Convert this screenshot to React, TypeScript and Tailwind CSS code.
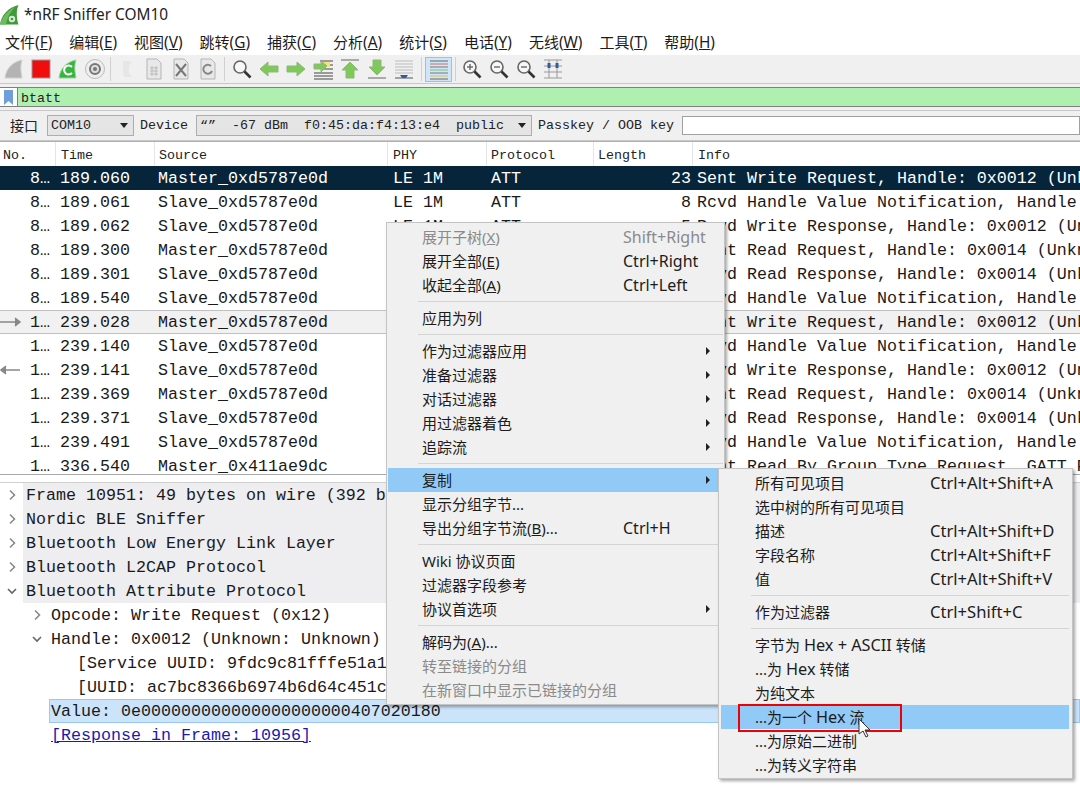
import React from 'react';

const uiFont = 'font-["Noto_Sans","Noto_Sans_CJK_SC",sans-serif]';
const monoFont = 'font-["Liberation_Mono","Noto_Sans_CJK_SC",monospace]';

const menus: [string, string][] = [
  ['文件', 'F'], ['编辑', 'E'], ['视图', 'V'], ['跳转', 'G'], ['捕获', 'C'], ['分析', 'A'],
  ['统计', 'S'], ['电话', 'Y'], ['无线', 'W'], ['工具', 'T'], ['帮助', 'H'],
];

const write = 'Sent Write Request, Handle: 0x0012 (Unknown: Unknown)';
const notify = 'Rcvd Handle Value Notification, Handle: 0x0014 (Unknown)';
const writeRsp = 'Rcvd Write Response, Handle: 0x0012 (Unknown: Unknown)';
const read = 'Sent Read Request, Handle: 0x0014 (Unknown: Unknown)';
const readRsp = 'Rcvd Read Response, Handle: 0x0014 (Unknown: Unknown)';

const packets = [
  ['8…', '189.060', 'Master_0xd5787e0d', '23', write],
  ['8…', '189.061', 'Slave_0xd5787e0d', '8', notify],
  ['8…', '189.062', 'Slave_0xd5787e0d', '5', writeRsp],
  ['8…', '189.300', 'Master_0xd5787e0d', '9', read],
  ['8…', '189.301', 'Slave_0xd5787e0d', '8', readRsp],
  ['8…', '189.540', 'Slave_0xd5787e0d', '8', notify],
  ['1…', '239.028', 'Master_0xd5787e0d', '23', write],
  ['1…', '239.140', 'Slave_0xd5787e0d', '8', notify],
  ['1…', '239.141', 'Slave_0xd5787e0d', '5', writeRsp],
  ['1…', '239.369', 'Master_0xd5787e0d', '9', read],
  ['1…', '239.371', 'Slave_0xd5787e0d', '8', readRsp],
  ['1…', '239.491', 'Slave_0xd5787e0d', '8', notify],
  ['1…', '336.540', 'Master_0x411ae9dc', '13', 'Sent Read By Group Type Request, GATT Primary Service'],
];

const Chevron = ({ open }: { open?: boolean }) => (
  <svg width="12" height="12" viewBox="0 0 12 12" fill="none" stroke="#8a8a8a" strokeWidth="1.6" className="shrink-0">
    {open ? <path d="M2 4l4 4 4-4" stroke="#666" /> : <path d="M4 1.5L8.5 6 4 10.5" />}
  </svg>
);

const Tool = ({ children, active }: { children: React.ReactNode; active?: boolean }) => (
  <div className={`flex h-[25px] w-[27px] shrink-0 items-center justify-center ${active ? 'border border-[#90c4ee] bg-[#cfe5f8]' : ''}`}>
    <svg width="22" height="22" viewBox="0 0 22 22">{children}</svg>
  </div>
);

const ToolSep = ({ w }: { w: string }) => (
  <div className={`flex h-[24px] shrink-0 justify-center ${w}`}>
    <div className="h-full w-px bg-[#d0d0d0]" />
  </div>
);

const PageIcon = ({ children }: { children: React.ReactNode }) => (
  <>
    <path d="M4 1h10l4 4v16H4z" fill="#e8e8e8" stroke="#b5b5b5" />
    {children}
  </>
);

const Magnifier = ({ sign }: { sign?: 'plus' | 'minus' }) => (
  <>
    <circle cx="9" cy="9" r="6" fill="#f7f7f7" stroke="#666" strokeWidth="1.6" />
    <path d="M13.5 13.5L19.5 19.5" stroke="#333" strokeWidth="2.6" />
    {sign && <path d="M6 9h6" stroke="#666" strokeWidth="1.4" />}
    {sign === 'plus' && <path d="M9 6v6" stroke="#666" strokeWidth="1.4" />}
  </>
);

const GreenArrow = ({ d }: { d: string }) => (
  <path d={d} fill="#7fc95a" stroke="#8fb87a" strokeWidth="1" />
);

const MenuSep = () => (
  <div className="flex h-[9px] items-center">
    <div className="ml-[30px] h-px flex-1 bg-[#d4d4d4]" />
  </div>
);

// latin in the reference runs wider than the CJK size suggests
const Lat = ({ children }: { children: React.ReactNode }) => <span className="text-[16.3px]">{children}</span>;

const MenuItem = ({ label, key_, shortcut, arrow, active, disabled, width, under, wide }: {
  label: React.ReactNode; key_?: string; shortcut?: string; arrow?: boolean; active?: boolean; disabled?: boolean; width: string; under?: string; wide?: boolean;
}) => (
  <div className={`flex h-[24px] items-center pl-[34px] text-[15px] ${active ? 'bg-[#91c9f7]' : ''} ${disabled ? 'text-[#8a8a8a]' : 'text-[#1c1c1c]'}`}>
    <span className={`shrink-0 whitespace-pre ${width}`}>
      {label}
      {under && <>(<span className="underline">{under}</span>){key_}</>}
    </span>
    {shortcut && <span className={`whitespace-pre ${wide ? 'text-[16.6px]' : 'text-[16px]'}`}>{shortcut}</span>}
    {arrow && (
      <svg width="6" height="8" viewBox="0 0 6 8" className="ml-auto mr-[12px]"><path d="M1 0l4 4-4 4z" fill="#222" /></svg>
    )}
  </div>
);

const MainMenu = () => {
  const w = 'w-[201px]';
  return (
    <div className={`absolute left-[386px] top-[222px] h-[483px] w-[339px] border border-[#c4c4c4] bg-[#f0f0f0] px-px pt-[2px] shadow-[2px_2px_3px_rgba(0,0,0,0.35)] ${uiFont}`}>
      <MenuItem width={w} label="展开子树" under="X" shortcut="Shift+Right" disabled />
      <MenuItem width={w} label="展开全部" under="E" shortcut="Ctrl+Right" />
      <MenuItem width={w} label="收起全部" under="A" shortcut="Ctrl+Left" />
      <MenuSep />
      <MenuItem width={w} label="应用为列" />
      <MenuSep />
      <MenuItem width={w} label="作为过滤器应用" arrow />
      <MenuItem width={w} label="准备过滤器" arrow />
      <MenuItem width={w} label="对话过滤器" arrow />
      <MenuItem width={w} label="用过滤器着色" arrow />
      <MenuItem width={w} label="追踪流" arrow />
      <MenuSep />
      <MenuItem width={w} label="复制" arrow active />
      <MenuItem width={w} label="显示分组字节..." />
      <MenuItem width={w} label="导出分组字节流" under="B" key_="..." shortcut="Ctrl+H" />
      <MenuSep />
      <MenuItem width={w} label="Wiki 协议页面" />
      <MenuItem width={w} label="过滤器字段参考" />
      <MenuItem width={w} label="协议首选项" arrow />
      <MenuSep />
      <MenuItem width={w} label="解码为" under="A" key_="..." />
      <MenuItem width={w} label="转至链接的分组" disabled />
      <MenuItem width={w} label="在新窗口中显示已链接的分组" disabled />
    </div>
  );
};

const CopyMenu = () => {
  const w = 'w-[175px]';
  return (
    <div className={`absolute left-[718px] top-[468px] h-[311px] w-[355px] border border-[#c4c4c4] bg-[#f0f0f0] pl-[2px] pr-[3px] pt-[2px] shadow-[2px_2px_3px_rgba(0,0,0,0.35)] ${uiFont}`}>
      <MenuItem wide width={w} label="所有可见项目" shortcut="Ctrl+Alt+Shift+A" />
      <MenuItem width={w} label="选中树的所有可见项目" />
      <MenuItem wide width={w} label="描述" shortcut="Ctrl+Alt+Shift+D" />
      <MenuItem wide width={w} label="字段名称" shortcut="Ctrl+Alt+Shift+F" />
      <MenuItem wide width={w} label="值" shortcut="Ctrl+Alt+Shift+V" />
      <MenuSep />
      <MenuItem wide width={w} label="作为过滤器" shortcut="Ctrl+Shift+C" />
      <MenuSep />
      <MenuItem width={w} label={<>字节为 <Lat>Hex + ASCII</Lat> 转储</>} />
      <MenuItem width={w} label={<>...为 <Lat>Hex</Lat> 转储</>} />
      <MenuItem width={w} label="为纯文本" />
      <MenuItem width={w} label={<>...为一个 <Lat>Hex</Lat> 流</>} active />
      <MenuItem width={w} label="...为原始二进制" />
      <MenuItem width={w} label="...为转义字符串" />
    </div>
  );
};

const DetailRow = ({ children, indent, chevron, open, shaded }: {
  children: React.ReactNode; indent: string; chevron?: boolean; open?: boolean; shaded?: boolean;
}) => (
  <div className={`flex h-[24px] items-center whitespace-pre ${indent}`}>
    <div className="flex w-[23px] shrink-0 justify-center">{chevron && <Chevron open={open} />}</div>
    <div className={`flex h-full flex-1 items-center pl-[3px] ${shaded ? 'bg-[#eeedf0]' : ''}`}>{children}</div>
  </div>
);

export default function App() {
  return (
    <div className={`relative h-[791px] w-[1080px] overflow-hidden bg-white ${uiFont}`}>
      {/* title */}
      <div className="flex h-[30px] items-center bg-white">
        <svg width="20" height="20" viewBox="0 0 20 20" className="mr-[4px] shrink-0">
          <path d="M0 19.500C1.500 10 8 2.500 18.500 0c-2.500 5.500-2 13.500 0 19.500z" fill="#3f9a3a" />
          <path d="M0 19.500C2 12 8 5 15 2c-5 5-8 11-9 17.500z" fill="#6dbb5e" />
          <circle cx="12" cy="14" r="3.200" fill="#d8ead6" />
          <circle cx="12" cy="14" r="1.300" fill="#3f9a3a" />
        </svg>
        <span className="text-[15.4px] text-[#222]">*nRF Sniffer COM10</span>
      </div>
      {/* menu bar */}
      <div className="flex h-[25px] items-center gap-[17px] bg-white pl-[5px] text-[15px] text-[#1c1c1c]">
        {menus.map(([name, k]) => (
          <span key={k} className="whitespace-pre">{name}<span className="text-[15.4px]">(<span className="underline">{k}</span>)</span></span>
        ))}
      </div>
      {/* toolbar */}
      <div className="flex h-[29px] items-center border-b border-[#c8c8c8] bg-[#f0f0f0]">
        <Tool><path d="M2 20C3 11 9 4 19 2c-2 6-1 13 0 18z" fill="#b4b4b4" stroke="#d0d0d0" /></Tool>
        <Tool><rect x="2" y="2" width="18" height="18" fill="#f00d0d" stroke="#999" /></Tool>
        <Tool>
          <path d="M2 20C3 11 9 4 19 2c-2 6-1 13 0 18z" fill="#35b53c" stroke="#9bd49b" />
          <path d="M15 9a4.500 4.500 0 1 0 0 6" fill="none" stroke="#fff" strokeWidth="2" />
        </Tool>
        <Tool>
          <circle cx="11" cy="11" r="9.500" fill="#eee" stroke="#bbb" />
          <circle cx="11" cy="11" r="5" fill="#ddd" stroke="#777" strokeWidth="2" />
          <circle cx="11" cy="11" r="2" fill="#777" />
        </Tool>
        <ToolSep w="w-[5px]" />
        <Tool><path d="M7 3h8v3l-2 1v9l2 1v2H8l-1-3V3z" fill="#e6e6e6" /></Tool>
        <Tool>
          <PageIcon><path d="M7 10h8M7 13h8M7 16h8M9 8v10M13 8v10" stroke="#bbb" /></PageIcon>
        </Tool>
        <Tool>
          <PageIcon><path d="M6 6l10 12M16 6L6 18" stroke="#777" strokeWidth="2" /></PageIcon>
        </Tool>
        <Tool>
          <PageIcon><path d="M14 8a4.500 4.500 0 1 0 1 5" fill="none" stroke="#888" strokeWidth="2" /></PageIcon>
        </Tool>
        <ToolSep w="w-[7px]" />
        <Tool><Magnifier /></Tool>
        <Tool><GreenArrow d="M2 11l8-7v4h10v6H10v4z" /></Tool>
        <Tool><GreenArrow d="M20 11l-8-7v4H2v6h10v4z" /></Tool>
        <Tool>
          <path d="M8 3h13M12 7h9M12 11h9M2 15h19M2 18h19M2 21h19" stroke="#444" />
          <path d="M10 4h8v5h-2z" fill="#f5e27a" />
          <GreenArrow d="M15 8L9 3v3H2v5h7v3z" />
        </Tool>
        <Tool>
          <path d="M2 2h18" stroke="#aaa" strokeWidth="2" />
          <GreenArrow d="M11 4l8 8h-4v8H7v-8H3z" />
        </Tool>
        <Tool>
          <GreenArrow d="M11 17l8-8h-4V2H7v7H3z" />
          <path d="M2 20h18" stroke="#aaa" strokeWidth="2" />
        </Tool>
        <Tool>
          <path d="M2 3h18M2 6h18M2 9h18M2 12h18M2 15h18" stroke="#bbb" />
          <path d="M2 20h18" stroke="#555" />
          <path d="M7 17h8l-2 3H9z" fill="#2f5e9e" />
        </Tool>
        <ToolSep w="w-[8px]" />
        <Tool active>
          <path d="M2 3h18" stroke="#666" />
          <path d="M2 6h18" stroke="#d86a6a" />
          <path d="M2 9h18" stroke="#777" />
          <path d="M2 12h18" stroke="#7cbf7c" />
          <path d="M2 15h18" stroke="#777" />
          <path d="M2 18h18" stroke="#e2bf5a" />
          <path d="M2 21h18" stroke="#666" />
        </Tool>
        <ToolSep w="w-[6px]" />
        <Tool><Magnifier sign="plus" /></Tool>
        <Tool><Magnifier sign="minus" /></Tool>
        <Tool><Magnifier sign="minus" /></Tool>
        <Tool>
          <path d="M2 2h18M2 8h18M2 14h18M2 20h18M7 2v18M15 2v18" stroke="#999" />
          <rect x="5.500" y="5" width="3" height="5" fill="#2f5e9e" />
          <rect x="13.500" y="5" width="3" height="5" fill="#2f5e9e" />
        </Tool>
      </div>
      {/* display filter */}
      <div className="flex h-[26px] items-center bg-[#f0f0f0]">
        <div className="flex h-[20px] w-full border-y border-[#808080] bg-[#afefaf]">
          <div className="flex w-[18px] shrink-0 items-center justify-center border-r border-[#808080] bg-white">
            <svg width="9" height="15" viewBox="0 0 9 15"><path d="M0 0h9v15L4.500 11 0 15z" fill="#6f9fd8" /></svg>
          </div>
          <span className={`pl-[3px] text-[13.3px] leading-[21px] text-[#222] ${monoFont}`}>btatt</span>
        </div>
      </div>
      {/* sniffer toolbar */}
      <div className={`flex h-[31px] items-center border-y border-[#c8c8c8] bg-[#f0f0f0] text-[13.33px] text-[#222] ${monoFont}`}>
        <span className={`ml-[10px] w-[37px] shrink-0 text-[14px] ${uiFont}`}>接口</span>
        <div className="flex h-[21px] w-[87px] shrink-0 items-center justify-between border border-[#adadad] bg-[#e5e5e5] pl-[3px] pr-[5px]">
          <span>COM10</span>
          <svg width="8" height="5" viewBox="0 0 8 5"><path d="M0 0h8L4 5z" fill="#222" /></svg>
        </div>
        <span className="ml-[6px] w-[56px] shrink-0">Device</span>
        <div className="flex h-[21px] w-[336px] shrink-0 items-center justify-between border border-[#adadad] bg-[#e5e5e5] pl-[3px] pr-[5px]">
          <span className="whitespace-pre">{'“”  -67 dBm  f0:45:da:f4:13:e4  public'}</span>
          <svg width="8" height="5" viewBox="0 0 8 5"><path d="M0 0h8L4 5z" fill="#222" /></svg>
        </div>
        <span className="ml-[6px] w-[144px] shrink-0 whitespace-pre">Passkey / OOB key</span>
        <div className="h-[19px] flex-1 border border-[#a0a0a0] bg-white" />
      </div>
      {/* packet list header */}
      <div className={`flex h-[25px] items-center border-t border-[#b0b0b0] bg-white text-[13.33px] text-[#222] ${monoFont}`}>
        <div className="h-full w-[56px] border-r border-[#e5e5e5] pl-[3px] leading-[27px]">No.</div>
        <div className="h-full w-[99px] border-r border-[#e5e5e5] pl-[5px] leading-[27px]">Time</div>
        <div className="h-full w-[233px] border-r border-[#e5e5e5] pl-[4px] leading-[27px]">Source</div>
        <div className="h-full w-[99px] border-r border-[#e5e5e5] pl-[5px] leading-[27px]">PHY</div>
        <div className="h-full w-[107px] border-r border-[#e5e5e5] pl-[4px] leading-[27px]">Protocol</div>
        <div className="h-full w-[99px] border-r border-[#e5e5e5] pl-[4px] leading-[27px]">Length</div>
        <div className="h-full flex-1 pl-[5px] leading-[27px]">Info</div>
      </div>
      {/* packet list */}
      <div className={`h-[308px] overflow-hidden text-[16.67px] ${monoFont}`}>
        {packets.map((p, i) => (
          <div
            key={i}
            className={`relative flex h-[24px] items-center whitespace-pre ${i === 0 ? 'bg-[#06253b] text-white' : i === 6 ? 'border-y border-[#c0c0c0] bg-[#f1f1f1] text-[#1a1a1a]' : 'text-[#1a1a1a]'}`}
          >
            {i === 6 && (
              <svg width="22" height="10" viewBox="0 0 22 10" className="absolute left-0 top-[6px]"><path d="M0 5h20M15 1l5 4-5 4" stroke="#888" strokeWidth="1.500" fill="#888" /></svg>
            )}
            {i === 8 && (
              <svg width="22" height="10" viewBox="0 0 22 10" className="absolute left-0 top-[7px]"><path d="M20 5H1M6 1L1 5l5 4" stroke="#888" strokeWidth="1.500" fill="#888" /></svg>
            )}
            <div className="w-[50px] shrink-0 text-right">{p[0]}</div>
            <div className="w-[108px] shrink-0 pl-[10px]">{p[1]}</div>
            <div className="w-[235px] shrink-0">{p[2]}</div>
            <div className="w-[98px] shrink-0">LE 1M</div>
            <div className="w-[109px] shrink-0">ATT</div>
            <div className="w-[91px] shrink-0 text-right">{p[3]}</div>
            <div className="shrink-0 pl-[6px]">{p[4]}</div>
          </div>
        ))}
      </div>
      {/* packet details */}
      <div className={`border-t border-[#a8a8a8] pt-[7px] text-[16.67px] text-[#1a1a1a] ${monoFont}`}>
        <div className="border-t border-[#d0d0d0]" />
        <DetailRow indent="" chevron shaded>Frame 10951: 49 bytes on wire (392 bits), 49 bytes captured (392 bits)</DetailRow>
        <DetailRow indent="" chevron shaded>Nordic BLE Sniffer</DetailRow>
        <DetailRow indent="" chevron shaded>Bluetooth Low Energy Link Layer</DetailRow>
        <DetailRow indent="" chevron shaded>Bluetooth L2CAP Protocol</DetailRow>
        <DetailRow indent="" chevron open shaded>Bluetooth Attribute Protocol</DetailRow>
        <DetailRow indent="pl-[25px]" chevron>Opcode: Write Request (0x12)</DetailRow>
        <DetailRow indent="pl-[25px]" chevron open>Handle: 0x0012 (Unknown: Unknown)</DetailRow>
        <DetailRow indent="pl-[51px]">[Service UUID: 9fdc9c81fffe51a1e5c8a3b1d2f47760]</DetailRow>
        <DetailRow indent="pl-[51px]">[UUID: ac7bc8366b6974b6d64c451c7f2a9e10]</DetailRow>
        <div className="ml-[49px] flex h-[24px] items-center whitespace-pre border border-[#99c8f0] bg-[#cce4fa] pl-[1px]">Value: 0e000000000000000000000407020180</div>
        <div className="flex h-[24px] items-center whitespace-pre pl-[51px]">
          <span className="text-[#1a1ab0] underline">[Response in Frame: 10956]</span>
        </div>
      </div>
      {/* context menus */}
      <MainMenu />
      <CopyMenu />
      <div className="absolute left-[738px] top-[704px] h-[28px] w-[164px] border-2 border-[#f00000]" />
      <svg width="14" height="21" viewBox="0 0 14 21" className="absolute left-[858px] top-[718px]">
        <path d="M1 1v15l4-3 3 6 2-1-3-6h5z" fill="#fff" stroke="#333" strokeWidth="1" />
      </svg>
    </div>
  );
}
